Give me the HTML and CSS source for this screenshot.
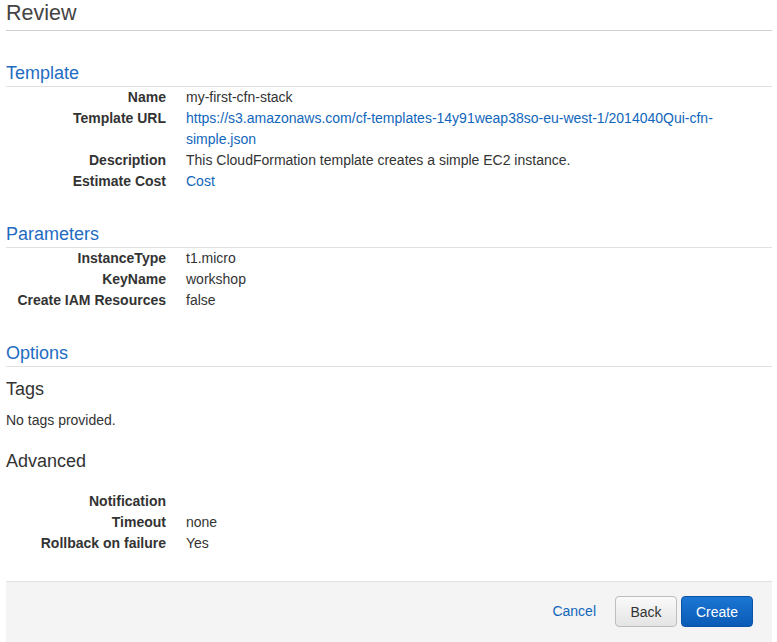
FILE: index.html
```html
<!DOCTYPE html>
<html>
<head>
<meta charset="utf-8">
<link rel="stylesheet" href="styles.css">
</head>
<body>
<div class="page">
  <h1 class="title">Review</h1>

  <h2 class="section">Template</h2>
  <div class="kv">
    <div class="k">Name</div><div class="v">my-first-cfn-stack</div>
    <div class="k">Template URL</div><div class="v"><a class="link" href="#">https://s3.amazonaws.com/cf-templates-14y91weap38so-eu-west-1/2014040Qui-cfn-simple.json</a></div>
    <div class="k">Description</div><div class="v">This CloudFormation template creates a simple EC2 instance.</div>
    <div class="k">Estimate Cost</div><div class="v"><a class="link" href="#">Cost</a></div>
  </div>

  <h2 class="section">Parameters</h2>
  <div class="kv">
    <div class="k">InstanceType</div><div class="v">t1.micro</div>
    <div class="k">KeyName</div><div class="v">workshop</div>
    <div class="k">Create IAM Resources</div><div class="v">false</div>
  </div>

  <h2 class="section">Options</h2>
  <h3 class="sub sub-tags">Tags</h3>
  <p class="note">No tags provided.</p>
  <h3 class="sub sub-adv">Advanced</h3>
  <div class="kv kv-adv">
    <div class="k">Notification</div><div class="v"></div>
    <div class="k">Timeout</div><div class="v">none</div>
    <div class="k">Rollback on failure</div><div class="v">Yes</div>
  </div>

  <div class="footer">
    <a class="cancel" href="#">Cancel</a>
    <button class="btn btn-back">Back</button>
    <button class="btn btn-create">Create</button>
  </div>
</div>
</body>
</html>
```

FILE: styles.css
```css
html, body {
  margin: 0;
  padding: 0;
  background: #fff;
}
body {
  font-family: "Liberation Sans", Arial, sans-serif;
  font-size: 14px;
  color: #333;
}
.page {
  padding: 0 5px 0 6px;
}
.title {
  margin: 0;
  font-size: 21.5px;
  font-weight: normal;
  line-height: 26px;
  color: #444;
  padding-bottom: 4px;
  border-bottom: 1px solid #cfcfcf;
}
.section {
  margin: 31px 0 0;
  font-size: 18px;
  font-weight: normal;
  line-height: 22px;
  color: #1f6cc2;
  padding-bottom: 2px;
  border-bottom: 1px solid #e1e1e1;
}
.kv {
  display: grid;
  grid-template-columns: 160px 1fr;
  column-gap: 20px;
  line-height: 21px;
}
.k {
  text-align: right;
  font-weight: bold;
  color: #333;
}
.v {
  color: #333;
  min-height: 21px;
}
.link {
  color: #1166bb;
  text-decoration: none;
}
.sub {
  margin: 0;
  font-size: 18px;
  font-weight: normal;
  line-height: 22px;
  color: #333;
}
.sub-tags {
  margin-top: 11px;
}
.note {
  margin: 10px 0 0;
  line-height: 21px;
}
.sub-adv {
  margin-top: 19px;
}
.kv-adv {
  margin-top: 19px;
}
.footer {
  margin-top: 27px;
  border-top: 1px solid #e2e2e2;
  background: #f4f4f4;
  height: 62px;
  padding: 14px 19px 0 0;
  box-sizing: border-box;
  display: flex;
  justify-content: flex-end;
  align-items: flex-start;
}
.cancel {
  color: #1166bb;
  text-decoration: none;
  line-height: 31px;
  margin-right: 19px;
}
.btn {
  font-family: "Liberation Sans", Arial, sans-serif;
  font-size: 14px;
  height: 31px;
  border-radius: 4px;
  padding: 0;
  cursor: pointer;
}
.btn-back {
  width: 62px;
  color: #333;
  background: linear-gradient(#fafafa, #e4e4e4);
  border: 1px solid #bdbdbd;
  margin-right: 4px;
}
.btn-create {
  width: 72px;
  color: #fff;
  background: linear-gradient(#1b76d3, #0a5bb6);
  border: 1px solid #0a53a6;
}
```
